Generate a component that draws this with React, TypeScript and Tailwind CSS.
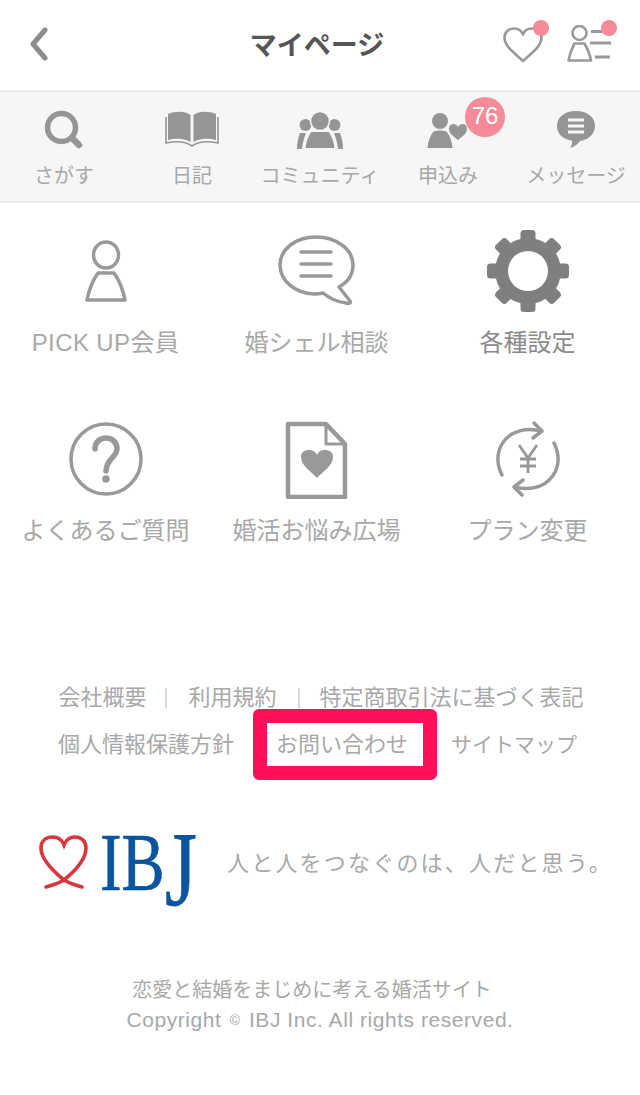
const FONT = "font-['Liberation_Sans','Noto_Sans_CJK_JP',sans-serif]";

function Back() {
  return (
    <svg width="20" height="34" viewBox="0 0 20 34" fill="none">
      <path d="M16 3 L4 17 L16 31" stroke="#8c8c8c" strokeWidth="5" strokeLinecap="round" strokeLinejoin="round" />
    </svg>
  );
}
function HeartLine() {
  return (
    <svg width="44" height="42" viewBox="0 0 44 42" fill="none">
      <path d="M22 37 C15 30 3.500 23 3.500 13.500 C3.500 8 8 4.500 13 4.500 C17 4.500 20.500 6.500 22 10.500 C23.500 6.500 27 4.500 31 4.500 C36 4.500 40.500 8 40.500 13.500 C40.500 23 29 30 22 37 Z" stroke="#999" strokeWidth="2.600" strokeLinejoin="round" />
    </svg>
  );
}
function PersonList() {
  return (
    <svg width="46" height="40" viewBox="0 0 46 40" fill="none" stroke="#999" strokeWidth="2.600">
      <circle cx="12.500" cy="8" r="7" />
      <path d="M7.500 18.500 H17.500 C20 23 23 29 24 35.500 H1.500 C2.500 29 5 23 7.500 18.500 Z" strokeLinejoin="round" />
      <path d="M24 6.500 H44 M23 18 H44 M28 32 H43" strokeWidth="3" />
    </svg>
  );
}
function Search() {
  return (
    <svg width="40" height="40" viewBox="0 0 40 40" fill="none">
      <circle cx="17.500" cy="17.500" r="14" stroke="#959595" strokeWidth="5.500" />
      <path d="M28 28 L35 35" stroke="#959595" strokeWidth="6.500" strokeLinecap="round" />
    </svg>
  );
}
function Book() {
  return (
    <svg width="54" height="38" viewBox="0 0 54 38" fill="none">
      <path d="M3 3 C10 0 20 0 25.500 4 V31 C19 27 10 27 3 29 Z" fill="#959595" />
      <path d="M51 3 C44 0 34 0 28.500 4 V31 C35 27 44 27 51 29 Z" fill="#959595" />
      <path d="M1 6 V32 C10 30 20 30 27 35 C34 30 44 30 53 32 V6" stroke="#959595" strokeWidth="1.600" />
    </svg>
  );
}
function Community() {
  return (
    <svg width="46" height="38" viewBox="0 0 46 38" fill="#959595">
      <circle cx="8.500" cy="14" r="6" />
      <circle cx="37.500" cy="14" r="6" />
      <path d="M3 22 H9 C7 27 5.500 33 5 38 H0 C0 32 1 27 3 22 Z" />
      <path d="M43 22 H37 C39 27 40.500 33 41 38 H46 C46 32 45 27 43 22 Z" />
      <circle cx="23" cy="10" r="9.500" stroke="#f6f6f6" strokeWidth="1.500" />
      <path d="M14 20 H32 C36 25 38 31 38.500 38 H7.500 C8 31 10 25 14 20 Z" stroke="#f6f6f6" strokeWidth="2" />
    </svg>
  );
}
function Apply() {
  return (
    <svg width="42" height="38" viewBox="0 0 42 38" fill="#959595">
      <circle cx="13" cy="10" r="8" />
      <path d="M6 21 C9 19 17 19 20 21 C23 25 25 31 25.500 37 H0.500 C1 31 3 25 6 21 Z" />
      <path d="M31 29 C27 25.500 22 23 22 17.500 C22 14.500 24 13 26.500 13 C28.500 13 30 14 31 16 C32 14 33.500 13 35.500 13 C38 13 40 14.500 40 17.500 C40 23 35 25.500 31 29 Z" />
    </svg>
  );
}
function Message() {
  return (
    <svg width="40" height="38" viewBox="0 0 40 38">
      <path d="M20 0 C31 0 39 6 39 15 C39 24 31 29 24 30 C22 33 18 36 14 37 C16 34 16.500 32 16 29.500 C8 28.500 1 24 1 15 C1 6 9 0 20 0 Z" fill="#959595" />
      <path d="M12 9 H28 M12 15 H28 M12 21 H28" stroke="#f6f6f6" strokeWidth="3.200" />
    </svg>
  );
}
function PersonBig() {
  return (
    <svg width="44" height="62" viewBox="0 0 44 62" fill="none" stroke="#999" strokeWidth="3.500">
      <ellipse cx="22" cy="15" rx="12.500" ry="13" />
      <path d="M14 33 H30 C35 40 39 50 41 60 H3 C5 50 9 40 14 33 Z" strokeLinejoin="round" />
    </svg>
  );
}
function BubbleBig() {
  return (
    <svg width="78" height="72" viewBox="0 0 78 72" fill="none" stroke="#999">
      <path d="M38 2 C58 2 75 14 75 30 C75 40 70 47 61 52 L72 66 C73 68 71 69 68 68 C60 67 51 63 45 58 C41 59 38 59 36 59 C17 58 2 46 2 30 C2 14 18 2 38 2 Z" strokeWidth="3.500" strokeLinejoin="round" />
      <path d="M23 17 H53 M23 29 H53 M23 41 H53" strokeWidth="3.500" strokeLinecap="round" />
    </svg>
  );
}
function Gear() {
  const teeth = [0, 45, 90, 135, 180, 225, 270, 315];
  return (
    <svg width="84" height="84" viewBox="0 0 84 84" fill="#7f7f7f">
      {teeth.map((a) => (
        <rect key={a} x="34.500" y="1" width="15" height="16" rx="3.500" transform={`rotate(${a} 42 42)`} />
      ))}
      <circle cx="42" cy="42" r="33" />
      <circle cx="42" cy="42" r="20" fill="#fff" />
    </svg>
  );
}
function Question() {
  return (
    <svg width="76" height="76" viewBox="0 0 76 76" fill="none" stroke="#999">
      <circle cx="38" cy="38" r="35" strokeWidth="3.500" />
      <path d="M27 28 C27 21 32 17 38 17 C44 17 49 21 49 28 C49 36 38 38 38 50" strokeWidth="5.500" strokeLinecap="round" />
      <circle cx="38" cy="58" r="3.800" fill="#999" stroke="none" />
    </svg>
  );
}
function Doc() {
  return (
    <svg width="64" height="80" viewBox="0 0 64 80" fill="none" stroke="#999">
      <path d="M3 5 H41 L60 25 V78 H3 Z" strokeWidth="4.500" strokeLinejoin="round" />
      <path d="M41 5 V25 H60" strokeWidth="3" strokeLinejoin="round" />
      <path d="M32 59 C27 53 16 47 16 38 C16 33 19.500 31 24 31 C28 31 31 33 32 36 C33 33 36 31 40 31 C44.500 31 48 33 48 38 C48 47 37 53 32 59 Z" fill="#999" stroke="none" />
    </svg>
  );
}
function Yen() {
  return (
    <svg width="66" height="76" viewBox="0 0 66 76" fill="none" stroke="#999">
      <path d="M7 54 C-1 38 3 22 17 13 C26 8 35 7 46 10" strokeWidth="3.500" strokeLinecap="round" />
      <path d="M39 2 L47 10 L38 17" strokeWidth="3.500" strokeLinecap="round" strokeLinejoin="round" />
      <path d="M59 22 C67 38 63 54 49 63 C40 68 31 69 20 66" strokeWidth="3.500" strokeLinecap="round" />
      <path d="M27 74 L19 66 L28 59" strokeWidth="3.500" strokeLinecap="round" strokeLinejoin="round" />
      <path d="M24 24 L33 37 L42 24 M33 37 V52 M25 38 H41 M25 45 H41" strokeWidth="2.800" />
    </svg>
  );
}
function RibbonHeart() {
  return (
    <svg width="50" height="56" viewBox="0 0 50 56" fill="none">
      <path d="M7 52 C14 50 20 48 25 45 C36 36 47 24 47 13 C47 6 42 2 36 2 C31 2 27 5 25 10 C23 5 19 2 14 2 C7 2 2 6 2 13 C2 24 14 36 25 45 C30 48 36 50 43 52" stroke="#d9363e" strokeWidth="3.600" strokeLinecap="round" />
    </svg>
  );
}

const tabs = [
  { label: "さがす", icon: <Search /> },
  { label: "日記", icon: <Book /> },
  { label: "コミュニティ", icon: <Community /> },
  { label: "申込み", icon: <Apply />, badge: "76" },
  { label: "メッセージ", icon: <Message /> },
];

const items = [
  { label: "PICK UP会員", icon: <PersonBig />, cls: "text-[#a8a8a8] tracking-[0.4px]" },
  { label: "婚シェル相談", icon: <BubbleBig />, cls: "text-[#a8a8a8]" },
  { label: "各種設定", icon: <Gear />, cls: "text-[#8a8a8a]" },
  { label: "よくあるご質問", icon: <Question />, cls: "text-[#a8a8a8]" },
  { label: "婚活お悩み広場", icon: <Doc />, cls: "text-[#a8a8a8]" },
  { label: "プラン変更", icon: <Yen />, cls: "text-[#a8a8a8]" },
];

export default function App() {
  return (
    <div className={`${FONT} w-[640px] h-[1095px] bg-white overflow-hidden`}>
      <header className="h-[90px] flex items-center pl-[29px] pr-[27px]">
        <div className="w-[20px] flex -mt-[2px]"><Back /></div>
        <h1 className="flex-1 text-center text-[27px] font-bold text-[#555] pl-[84px] mt-[3px]">マイページ</h1>
        <div className="flex items-center gap-[22px]">
          <div className="relative w-[44px] h-[42px]">
            <HeartLine />
            <span className="absolute -top-[4px] -right-[4px] w-[16px] h-[16px] rounded-full bg-[#f58a98]" />
          </div>
          <div className="relative w-[46px] h-[40px]">
            <PersonList />
            <span className="absolute -top-[5px] -right-[4px] w-[16px] h-[16px] rounded-full bg-[#f58a98]" />
          </div>
        </div>
      </header>

      <nav className="h-[113px] bg-[#f6f6f6] border-y-2 border-[#ececec] grid grid-cols-5">
        {tabs.map((t) => (
          <div key={t.label} className="flex flex-col items-center pt-[17px]">
            <div className="relative h-[42px] flex items-center justify-center">
              {t.icon}
              {t.badge && (
                <span className="absolute -top-[12px] -right-[36px] w-[40px] h-[40px] rounded-full bg-[#f58a98] text-white text-[24px] pb-[3px] flex items-center justify-center">
                  {t.badge}
                </span>
              )}
            </div>
            <span className="mt-[10px] text-[20px] leading-[30px] text-[#a8a8a8] whitespace-nowrap">{t.label}</span>
          </div>
        ))}
      </nav>

      <main className="grid grid-cols-3 pr-[7px]">
        {items.map((it) => (
          <div key={it.label} className="h-[188px] flex flex-col items-center pt-[27px]">
            <div className="h-[82px] flex items-center justify-center">{it.icon}</div>
            <span className={`mt-[13px] text-[24px] leading-[36px] whitespace-nowrap ${it.cls}`}>{it.label}</span>
          </div>
        ))}
      </main>

      <section className="mt-[103px] text-[22px] leading-[32px] text-[#a8a8a8]">
        <div className="flex items-center justify-center whitespace-nowrap pl-[2px]">
          <span>会社概要</span>
          <span className="w-[2px] h-[20px] bg-[#d8d8d8] ml-[19px] mr-[21px]" />
          <span>利用規約</span>
          <span className="w-[2px] h-[20px] bg-[#d8d8d8] ml-[21px] mr-[20px]" />
          <span>特定商取引法に基づく表記</span>
        </div>
        <div className="-mt-[5px] flex items-center justify-center whitespace-nowrap pr-[5px]">
          <span>個人情報保護方針</span>
          <span className="ml-[19px] mr-[14px] w-[184px] h-[71px] border-[14px] border-[#ff1059] rounded-[6px] pl-[9px] flex items-center">
            お問い合わせ
          </span>
          <span className="text-[21px]">サイトマップ</span>
        </div>
      </section>

      <section className="mt-[53px] pl-[39px] flex items-start">
        <div className="mt-[2px] flex"><RibbonHeart /></div>
        <svg width="106" height="110" viewBox="0 0 106 110" className="ml-[9px] -mt-[20px] -mb-[14px]">
          <g transform="translate(2 77) scale(0.79 1)">
            <text x="0" y="0" fill="#0b559f" stroke="#0b559f" strokeWidth="0.6" fontFamily="'Liberation Serif',serif" fontSize="82">IB</text>
          </g>
          <g transform="translate(67 92) scale(1 1.3)">
            <text x="0" y="0" fill="#0b559f" stroke="#0b559f" strokeWidth="0.6" fontFamily="'Liberation Serif',serif" fontSize="82">J</text>
          </g>
        </svg>
        <span className="ml-[23px] mt-[15px] text-[22px] leading-[32px] tracking-[2.2px] text-[#a8a8a8] whitespace-nowrap">人と人をつなぐのは、人だと思う。</span>
      </section>

      <footer className="mt-[67px] text-center text-[#a8a8a8]">
        <div className="text-[20px] leading-[28px] pr-[16px]">恋愛と結婚をまじめに考える婚活サイト</div>
        <div className="text-[21px] leading-[31px] tracking-[0.55px]">
          Copyright <span className="text-[14px] align-[2px] mx-[2px]">©</span> IBJ Inc. All rights reserved.
        </div>
      </footer>
    </div>
  );
}
